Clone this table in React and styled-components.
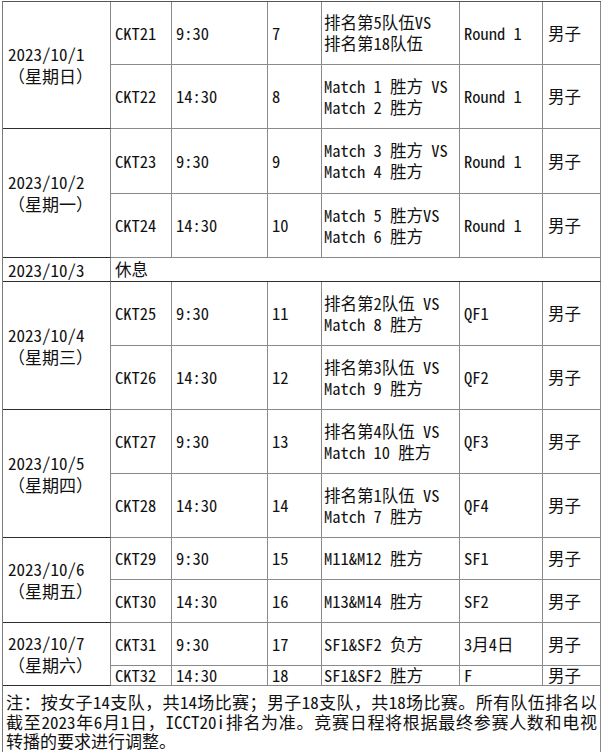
import React from "react";
import styled, { createGlobalStyle } from "styled-components";

const GlobalStyle = createGlobalStyle`
  html, body { margin: 0; padding: 0; background: #ffffff; }
  body { overflow: hidden; }
`;

const FONT = `"Noto Sans Mono CJK SC", "Noto Sans CJK SC", "DejaVu Sans Mono", monospace`;

const Page = styled.div`
  padding: 1px 0 0 2px;
`;

const Schedule = styled.div`
  display: grid;
  grid-template-columns: 108px 61px 96px 54px 138px 83px 58px;
  grid-template-rows: ${(p) => p.$rows};
  width: 599px;
  box-sizing: border-box;
  border-left: 1px solid #7a7a7a;
  border-top: 1px solid #555555;
  font-family: ${FONT};
  font-size: 16.5px;
  color: #111111;
`;

const Cell = styled.div`
  box-sizing: border-box;
  display: flex;
  align-items: center;
  min-width: 0;
  overflow: hidden;
  white-space: nowrap;
  line-height: 21px;
  padding-left: ${(p) => p.$pad ?? 4}px;
  border-right: 1px solid #8a8a8a;
  border-bottom: 1px solid ${(p) => (p.$dark ? "#2e2e2e" : "#8a8a8a")};
  grid-column: ${(p) => (p.$cols ? `span ${p.$cols}` : "auto")};
  grid-row: ${(p) => (p.$span ? `span ${p.$span}` : "auto")};
`;

const DateCell = styled(Cell)`
  flex-direction: column;
  align-items: flex-start;
  justify-content: center;
  padding-left: 5px;
  line-height: 22px;
  font-size: 17px;
`;

const MatchText = styled.div`
  display: flex;
  flex-direction: column;
  line-height: 21px;
`;

const NoteCell = styled.div`
  grid-column: 1 / -1;
  box-sizing: border-box;
  border-right: 1px solid #8a8a8a;
  padding: 6px 3px 0 3px;
  font-size: 17px;
  line-height: 19.5px;
  min-height: 70px;
`;

const NoteLine = styled.div`
  text-align: ${(p) => (p.$justify ? "justify" : "left")};
  text-align-last: ${(p) => (p.$justify ? "justify" : "auto")};
  white-space: nowrap;
`;

const days = [
  {
    date: "2023/10/1",
    week: "（星期日）",
    matches: [
      { h: 63, id: "CKT21", time: "9:30", no: "7", vs: ["排名第5队伍VS", "排名第18队伍"], round: "Round 1" },
      { h: 64, id: "CKT22", time: "14:30", no: "8", vs: ["Match 1 胜方 VS", "Match 2 胜方"], round: "Round 1" },
    ],
  },
  {
    date: "2023/10/2",
    week: "（星期一）",
    matches: [
      { h: 65, id: "CKT23", time: "9:30", no: "9", vs: ["Match 3 胜方 VS", "Match 4 胜方"], round: "Round 1" },
      { h: 64, id: "CKT24", time: "14:30", no: "10", vs: ["Match 5 胜方VS", "Match 6 胜方"], round: "Round 1" },
    ],
  },
  { date: "2023/10/3", rest: "休息", h: 24 },
  {
    date: "2023/10/4",
    week: "（星期三）",
    matches: [
      { h: 64, id: "CKT25", time: "9:30", no: "11", vs: ["排名第2队伍 VS", "Match 8 胜方"], round: "QF1" },
      { h: 64, id: "CKT26", time: "14:30", no: "12", vs: ["排名第3队伍 VS", "Match 9 胜方"], round: "QF2" },
    ],
  },
  {
    date: "2023/10/5",
    week: "（星期四）",
    matches: [
      { h: 64, id: "CKT27", time: "9:30", no: "13", vs: ["排名第4队伍 VS", "Match 10 胜方"], round: "QF3" },
      { h: 64, id: "CKT28", time: "14:30", no: "14", vs: ["排名第1队伍 VS", "Match 7 胜方"], round: "QF4" },
    ],
  },
  {
    date: "2023/10/6",
    week: "（星期五）",
    matches: [
      { h: 42, id: "CKT29", time: "9:30", no: "15", vs: ["M11&M12 胜方"], round: "SF1" },
      { h: 43, id: "CKT30", time: "14:30", no: "16", vs: ["M13&M14 胜方"], round: "SF2" },
    ],
  },
  {
    date: "2023/10/7",
    week: "（星期六）",
    matches: [
      { h: 43, id: "CKT31", time: "9:30", no: "17", vs: ["SF1&SF2 负方"], round: "3月4日" },
      { h: 20, id: "CKT32", time: "14:30", no: "18", vs: ["SF1&SF2 胜方"], round: "F" },
    ],
  },
];

const rowHeights = days
  .flatMap((d) => (d.rest ? [d.h] : d.matches.map((m) => m.h)))
  .map((h) => `${h}px`)
  .concat("auto")
  .join(" ");

export default function App() {
  return (
    <>
      <GlobalStyle />
      <Page>
        <Schedule $rows={rowHeights}>
          {days.map((d) =>
            d.rest ? (
              <React.Fragment key={d.date}>
                <DateCell $dark>{d.date}</DateCell>
                <Cell $cols={6} $dark>{d.rest}</Cell>
              </React.Fragment>
            ) : (
              <React.Fragment key={d.date}>
                <DateCell $span={2} $dark>
                  <span>{d.date}</span>
                  <span>{d.week}</span>
                </DateCell>
                {d.matches.map((m) => (
                  <React.Fragment key={m.id}>
                    <Cell>{m.id}</Cell>
                    <Cell>{m.time}</Cell>
                    <Cell>{m.no}</Cell>
                    <Cell $pad={2}>
                      <MatchText>
                        {m.vs.map((line) => (
                          <span key={line}>{line}</span>
                        ))}
                      </MatchText>
                    </Cell>
                    <Cell>{m.round}</Cell>
                    <Cell $pad={5}>男子</Cell>
                  </React.Fragment>
                ))}
              </React.Fragment>
            )
          )}
          <NoteCell>
            <NoteLine $justify>注：按女子14支队，共14场比赛；男子18支队，共18场比赛。所有队伍排名以</NoteLine>
            <NoteLine $justify>截至2023年6月1日，ICCT20i排名为准。竞赛日程将根据最终参赛人数和电视</NoteLine>
            <NoteLine>转播的要求进行调整。</NoteLine>
          </NoteCell>
        </Schedule>
      </Page>
    </>
  );
}
